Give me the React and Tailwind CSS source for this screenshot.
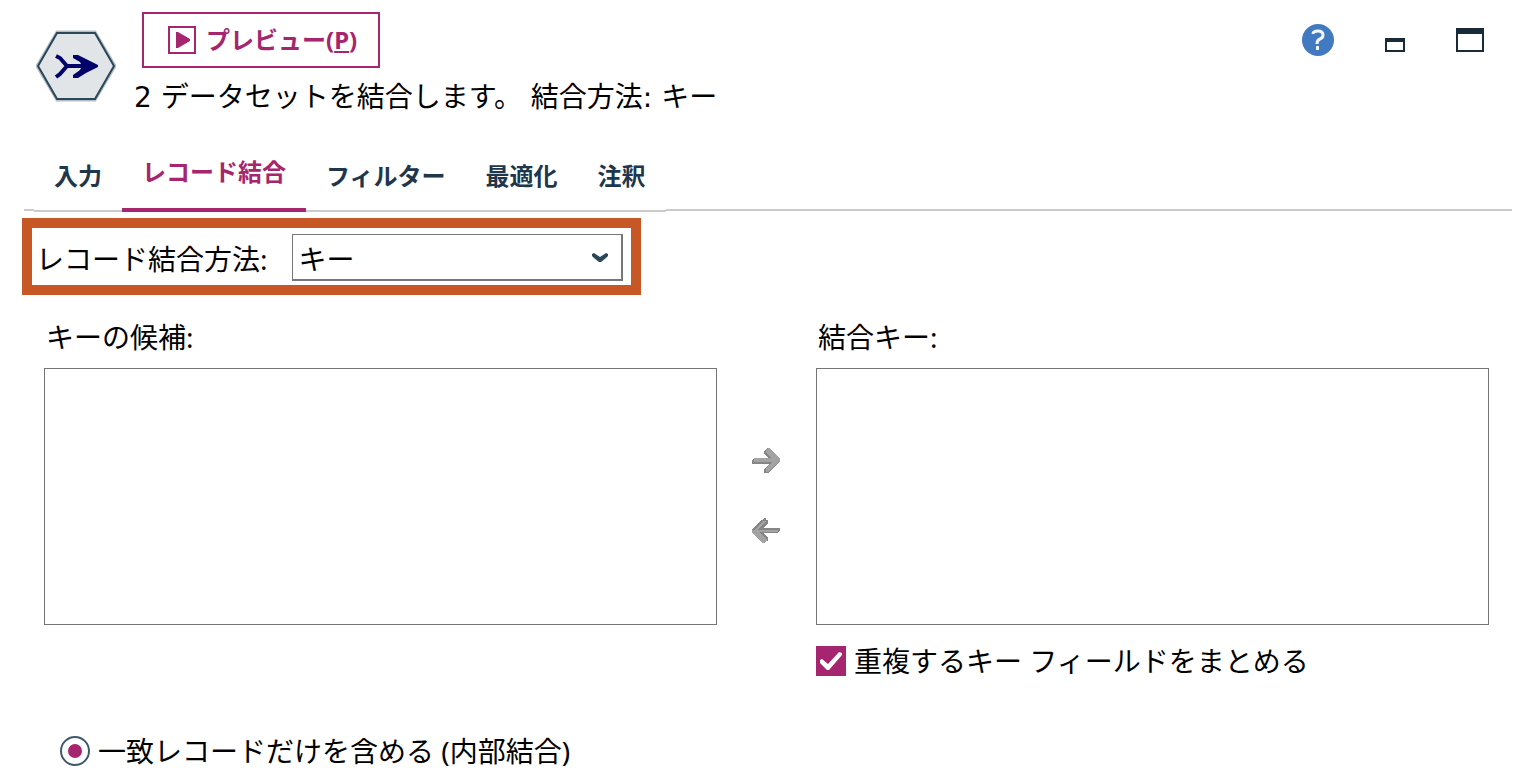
import { useState } from "react";

const tabs = ["入力", "レコード結合", "フィルター", "最適化", "注釈"];

function NodeIcon() {
  return (
    <svg className="h-[72px] w-20 shrink-0" viewBox="0 0 80 72" aria-hidden="true">
      <path d="M21 2H59L79 36L59 70H21L1 36Z" fill="#e1e5e8" stroke="#b3bec6" strokeWidth="3" />
      <path d="M21 3H59L78 36L59 69H21L2 36Z" fill="none" stroke="#2c475a" strokeWidth="2" />
      <path d="M20 26L24 28L31 36H46M20 47L24 44L31 36" fill="none" stroke="#02026b" strokeWidth="4" />
      <path d="M30 34H45L44 32L37 28V25H42L50 29L62 35V37L50 43L42 48H37V45L44 40L45 38H30Z" fill="#02026b" />
    </svg>
  );
}

function PreviewIcon() {
  return (
    <svg className="size-7" viewBox="0 0 28 28" aria-hidden="true">
      <path d="M1 1H27V27H1Z" fill="none" stroke="#a5266e" strokeWidth="2" />
      <path d="M8 6H10L22 13V15L10 22H8Z" fill="#a5266e" />
    </svg>
  );
}

function ArrowIcon({ left }) {
  return left ? (
    <svg className="h-7 w-7" viewBox="0 0 28 28" shapeRendering="crispEdges" aria-hidden="true">
      <path d="M12 1H14V3H16V6L11 11H28V13L26 16H12L16 21V24H12V26H10L0 16V12L10 3Z" fill="#858585" />
      <path d="M11 4H14L6 13H26V15H8L15 23L12 26H10L0 16V13H2Z" fill="#a3a3a3" />
    </svg>
  ) : (
    <svg className="h-7 w-7" viewBox="0 0 28 28" shapeRendering="crispEdges" aria-hidden="true">
      <path d="M12 4L16 1H18L28 12V14L16 26H12V22L17 17H0V13L2 11H16L12 7Z" fill="#858585" />
      <path d="M14 3L16 1H18L28 12V14L16 25H14V22L20 15H2V11H19L14 6Z" fill="#a3a3a3" />
    </svg>
  );
}

function KeyList({ id, label, children }) {
  return (
    <section className="flex min-w-0 flex-1 flex-col">
      <label htmlFor={id} className="pl-0.5 text-[28px] leading-9">
        {label}
      </label>
      <select id={id} size={8} className="mt-[13px] h-[257px] w-full appearance-none border border-[#757575] bg-white" />
      {children}
    </section>
  );
}

export default function App() {
  const [active, setActive] = useState(1);
  return (
    <main className="bg-white pb-4 font-['Noto_Sans','Noto_Sans_CJK_JP',sans-serif] text-black">
      <header className="flex items-start pt-3 pr-14 pl-9">
        <div className="pt-[18px]">
          <NodeIcon />
        </div>
        <div className="ml-[18px] flex flex-1 flex-col items-start">
          <button type="button" className="ml-2 flex h-14 items-center gap-2.5 border-2 border-[#a5266e] pr-[21px] pl-6 text-2xl font-bold text-[#a5266e]">
            <PreviewIcon />
            <span>
              プレビュー(<span className="underline decoration-2 underline-offset-2">P</span>)
            </span>
          </button>
          <p className="mt-3 font-['DejaVu_Sans','Noto_Sans_CJK_JP',sans-serif] text-[28px] leading-9">
            2 データセットを結合します。 結合方法: キー
          </p>
        </div>
        <div className="flex items-center gap-[51px] pt-3">
          <button type="button" aria-label="ヘルプ">
            <svg className="size-8" viewBox="0 0 32 32" aria-hidden="true">
              <circle cx="16" cy="16" r="16" fill="#427ac2" />
              <path d="M11 10Q11 7 16 7Q21 7 21 11Q21 14 18 15Q15 16 15 20" fill="none" stroke="#f2f6fb" strokeWidth="3" />
              <path d="M14 22H17V26H14Z" fill="#f2f6fb" />
            </svg>
          </button>
          <button type="button" aria-label="最小化">
            <svg className="h-6 w-5" viewBox="0 0 20 24" aria-hidden="true">
              <path d="M0 10H20V24H0ZM2 14V22H18V14Z" fill="#172b38" fillRule="evenodd" />
            </svg>
          </button>
          <button type="button" aria-label="最大化">
            <svg className="h-6 w-7" viewBox="0 0 28 24" aria-hidden="true">
              <path d="M0 0H28V24H0ZM2 6V22H26V6Z" fill="#172b38" fillRule="evenodd" />
            </svg>
          </button>
        </div>
      </header>

      <nav className="mt-6 mr-7 ml-6 flex items-end">
        <span className="mb-px w-2.5 border-b-2 border-[#cbcbcb]" />
        <div role="tablist" className="flex">
          {tabs.map((tab, i) => (
            <button
              key={tab}
              type="button"
              role="tab"
              aria-selected={i === active}
              onClick={() => setActive(i)}
              className={
                i === active
                  ? "h-[72px] border-b-4 border-[#a5266e] px-5 pb-1 text-2xl font-bold text-[#a5266e]"
                  : "h-[72px] border-b-2 border-[#cbcbcb] px-5 pt-0.5 text-2xl font-bold text-[#20374b]"
              }
            >
              {tab}
            </button>
          ))}
        </div>
        <span className="mb-px flex-1 border-b-2 border-[#cbcbcb]" />
      </nav>

      <div className="mt-1.5 ml-[22px] flex w-fit items-center border-10 border-[#c75724] pt-1.5 pr-2 pb-1 pl-1">
        <label htmlFor="method" className="mr-6 pt-0.5 text-[28px] leading-9">
          レコード結合方法:
        </label>
        <div className="grid items-center">
          <select
            id="method"
            className="col-start-1 row-start-1 h-[47px] w-[331px] appearance-none border border-r-2 border-b-2 border-[#777777] bg-white pt-1 pl-1.5 text-[28px] leading-9"
          >
            <option>キー</option>
          </select>
          <svg className="pointer-events-none col-start-1 row-start-1 mr-[15px] h-2.5 w-4 justify-self-end" viewBox="0 0 16 10" aria-hidden="true">
            <path d="M0 1L2 0L5 2L8 4L11 2L14 0L16 1V3L14 5L9 9H7L2 5L0 3Z" fill="#2c475a" />
          </svg>
        </div>
      </div>

      <div className="mt-6 flex items-start pr-[51px] pl-11">
        <KeyList id="candidates" label="キーの候補:" />
        <div className="flex w-[99px] flex-col items-center gap-[42px] pt-32 pr-px">
          <button type="button" aria-label="追加">
            <ArrowIcon />
          </button>
          <button type="button" aria-label="削除">
            <ArrowIcon left />
          </button>
        </div>
        <KeyList id="keys" label="結合キー:">
          <label className="mt-[18px] flex items-center gap-2 text-[28px] leading-9">
            <span className="grid size-[30px] place-items-center">
              <input type="checkbox" defaultChecked className="peer col-start-1 row-start-1 size-[30px] appearance-none border-2 border-[#a5266e] checked:bg-[#a5266e]" />
              <svg className="pointer-events-none invisible col-start-1 row-start-1 size-[30px] peer-checked:visible" viewBox="0 0 30 30" aria-hidden="true">
                <path d="M4 14L6 13L12 18L23 6L26 7V9L13 24H11L4 17Z" fill="#fff" />
              </svg>
            </span>
            重複するキー フィールドをまとめる
          </label>
        </KeyList>
      </div>

      <label className="mt-[54px] ml-[60px] flex w-fit items-center gap-2 text-[28px] leading-9">
        <input
          type="radio"
          name="join"
          defaultChecked
          className="grid size-[30px] appearance-none place-items-center rounded-full border-2 border-[#40586a] before:size-3.5 before:rounded-full checked:before:bg-[#a5266e]"
        />
        一致レコードだけを含める (内部結合)
      </label>
    </main>
  );
}
